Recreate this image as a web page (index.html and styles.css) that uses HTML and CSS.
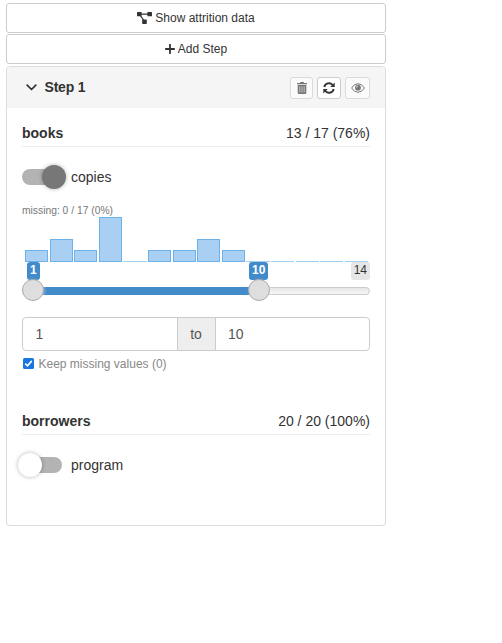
FILE: index.html
```html
<!DOCTYPE html>
<html lang="en">
<head>
<meta charset="utf-8">
<title>Cohort filters</title>
<link rel="stylesheet" href="styles.css">
</head>
<body>
<main class="sidebar">
  <button class="action"><svg class="tree" width="15" height="12" viewBox="0 0 15 12"><path d="M4 2.200h7M3 3l4.500 6.500" fill="none" stroke="currentColor" stroke-width="1.300"/><rect x="0" y="0" width="4.600" height="4.300" rx=".6"/><rect x="10.400" y="0" width="4.600" height="4.300" rx=".6"/><rect x="5.200" y="7.600" width="4.600" height="4.300" rx=".6"/></svg><span>Show attrition data</span></button>
  <button class="action"><svg class="plus" width="10" height="10" viewBox="0 0 10 10"><path d="M5 .8v8.400M.8 5h8.400" stroke="currentColor" stroke-width="1.800" stroke-linecap="round"/></svg><span>Add Step</span></button>
  <section class="panel">
    <header class="panel-head">
      <svg class="chevron" width="11" height="7" viewBox="0 0 11 7"><path d="M1.2 1.2l4.3 4.3 4.3-4.3" fill="none" stroke="currentColor" stroke-width="1.7" stroke-linecap="round" stroke-linejoin="round"/></svg>
      <strong class="step">Step 1</strong>
      <div class="tools">
        <button class="tool off" aria-label="Delete"><svg width="10" height="12" viewBox="0 0 10 12"><path d="M3.4 0h3.2l.5 1H10v1.3H0V1h2.900zM.7 3h8.600v7.800q0 1.200-1.200 1.200H1.900Q.7 12 .7 10.800zM2.600 4.300v6.300h.6V4.300zM4.700 4.300v6.300h.6V4.300zM6.800 4.300v6.300h.6V4.300z" fill="currentColor" fill-rule="evenodd"/></svg></button>
        <button class="tool" aria-label="Reset"><svg width="12" height="12" viewBox="0 0 12 12"><path d="M1.300 5A4.700 4.700 0 0 1 9.600 3M10.700 7A4.700 4.700 0 0 1 2.400 9" fill="none" stroke="currentColor" stroke-width="1.900"/><path d="M11.700.5V5H7.200zM.3 11.500V7h4.500z" fill="currentColor"/></svg></button>
        <button class="tool off wide" aria-label="Preview"><svg width="14" height="10" viewBox="0 0 14 10"><path d="M.6 5Q3.200.7 7 .7T13.400 5Q10.800 9.300 7 9.300T.6 5z" fill="none" stroke="currentColor"/><circle cx="7" cy="4.700" r="2.900" fill="currentColor"/><path d="M5.400 4.600Q5.400 3.100 7 3.100" fill="none" stroke="#fff" stroke-width=".7"/></svg></button>
      </div>
    </header>
    <div class="panel-body">
      <div class="group-head"><strong>books</strong><span>13 / 17 (76%)</span></div>
      <div class="toggle"><i class="switch on"></i><span>copies</span></div>
      <div class="missing">missing: 0 / 17 (0%)</div>
      <div class="histogram">
        <i class="h1"></i><i class="h2"></i><i class="h1"></i><i class="h4"></i><i></i><i class="h1"></i><i class="h1"></i><i class="h2"></i><i class="h1"></i><i></i><i></i><i></i><i></i><i></i>
      </div>
      <div class="slider">
        <span class="tag from">1</span><span class="tag to">10</span><span class="tag max">14</span>
        <div class="line"><div class="fill"></div></div>
        <i class="grip low"></i><i class="grip high"></i>
      </div>
      <div class="range"><div class="field">1</div><div class="addon">to</div><div class="field">10</div></div>
      <div class="keep"><svg width="11" height="11" viewBox="0 0 11 11"><rect width="11" height="11" rx="1.500" fill="#1976df"/><path d="M2.300 5.600l2.200 2.200 4.300-4.900" fill="none" stroke="#fff" stroke-width="1.600"/></svg><span>Keep missing values (0)</span></div>
      <div class="group-head second"><strong>borrowers</strong><span>20 / 20 (100%)</span></div>
      <div class="toggle"><i class="switch"></i><span>program</span></div>
    </div>
  </section>
</main>
</body>
</html>
```
FILE: styles.css
```css
* { box-sizing: border-box; }
body {
  margin: 0;
  background: #fff;
  color: #333;
  font: 14px/20px "Liberation Sans", Arial, sans-serif;
}
.sidebar { width: 380px; margin: 3px 0 0 6px; }
svg { display: block; flex: none; }
button { font-family: inherit; color: #333; background: #fff; border: 1px solid #ccc; border-radius: 3px; }
.action {
  display: flex;
  align-items: center;
  justify-content: center;
  width: 100%;
  height: 30px;
  margin-bottom: 1px;
  padding: 0;
  font-size: 12px;
  line-height: 18px;
}
.tree { margin: 0 3px 1px 0; fill: currentColor; }
.plus { margin: 0 3px 1px 0; }
.panel {
  height: 460px;
  margin-top: 2px;
  border: 1px solid #ddd;
  border-radius: 4px;
  box-shadow: 0 1px 1px rgba(0, 0, 0, .05);
}
.panel-head {
  display: flex;
  align-items: center;
  height: 41px;
  padding: 0 15px 0 19px;
  background: #f5f5f5;
  border-radius: 3px 3px 0 0;
}
.step { margin: 0 0 2px 7.5px; letter-spacing: -.2px; }
.tools { display: flex; gap: 4px; margin-left: auto; }
.tool {
  display: flex;
  align-items: center;
  justify-content: center;
  width: 24px;
  height: 22px;
  padding: 0;
}
.off { opacity: .65; }
.tool.off { width: 23px; }
.tool.wide { width: 25px; }
.panel-body { padding: 15px; }
.group-head {
  display: flex;
  justify-content: space-between;
  height: 24px;
  border-bottom: 1px solid #eee;
}
.second { margin-top: 37px; }
.toggle { display: flex; align-items: center; height: 24px; margin-top: 18px; }
.toggle span { margin-left: 5px; }
.switch {
  position: relative;
  width: 40px;
  height: 16px;
  margin-right: 4px;
  border-radius: 8px;
  background: #b3b3b3;
}
.switch::after {
  content: "";
  position: absolute;
  left: -4px;
  top: -4px;
  width: 24px;
  height: 24px;
  border-radius: 50%;
  background: #fff;
  box-shadow: 0 0 4px rgba(0, 0, 0, .3);
}
.switch.on::after { left: 20px; background: #777; }
.missing { height: 14px; margin-top: 15px; color: #777; font-size: 10.3px; line-height: 14px; }
.histogram {
  display: grid;
  grid-template-columns: repeat(14, 1fr);
  column-gap: 1.5px;
  align-items: end;
  height: 45px;
  margin: -1px 2px 0 3px;
}
.histogram i { height: 1px; background: #a2d0f3; }
.histogram .h1, .histogram .h2, .histogram .h4 { background: #a9cff3; border: 1px solid #6db1e9; }
.histogram .h1 { height: 12px; }
.histogram .h2 { height: 23px; }
.histogram .h4 { height: 45px; }
.slider { position: relative; height: 55px; padding-top: 25px; }
.line { height: 8px; border: 1px solid #ccc; border-radius: 8px; background: linear-gradient(#ddd -50%, #fff 150%); }
.fill { width: 226px; height: 8px; margin: -1px 0 0 10px; background: #428bca; }
.tag {
  position: absolute;
  top: 0;
  height: 18px;
  padding: 0 3px;
  border-radius: 3px;
  background: #428bca;
  color: #fff;
  font-size: 12px;
  line-height: 17px;
}
.from { left: 5px; font-weight: bold; }
.to { left: 227px; font-weight: bold; }
.max { right: 0; background: #e6e6e6; color: #333; }
.grip {
  position: absolute;
  top: 17px;
  width: 22px;
  height: 22px;
  border: 1px solid #ababab;
  border-radius: 50%;
  background: #dedede;
  box-shadow: 1px 1px 3px rgba(255, 255, 255, .3);
}
.low { left: 0; }
.high { left: 226px; }
.range { display: flex; height: 34px; border: 1px solid #ccc; border-radius: 4px; color: #555; line-height: 32px; }
.field { flex: 1; padding-left: 12.5px; }
.addon { width: 39px; text-align: center; background: #eee; border: solid #ccc; border-width: 0 1px; }
.keep { display: flex; align-items: center; height: 20px; margin: 3px 0 0 1px; color: #888; font-size: 12px; }
.keep svg { margin-bottom: 1px; }
.keep span { margin-left: 4.5px; }
```
